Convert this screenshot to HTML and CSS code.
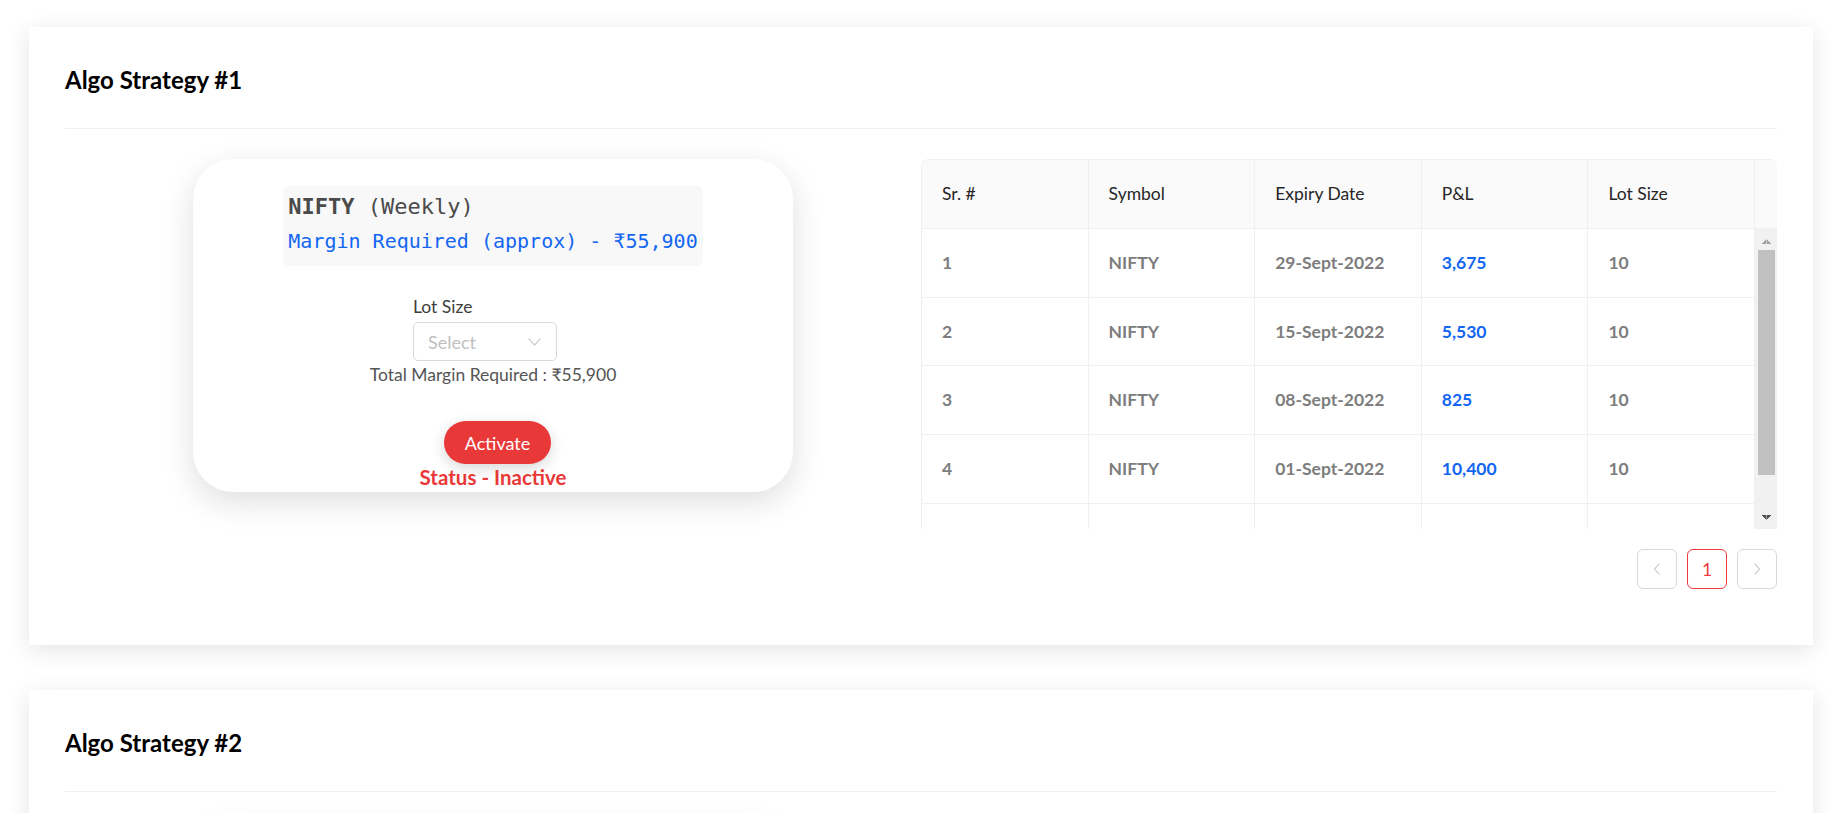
FILE: index.html
```html
<!DOCTYPE html>
<html lang="en">
<head>
<meta charset="utf-8">
<title>Algo Strategies</title>
<link rel="stylesheet" href="styles.css">
</head>
<body>
<main class="page">
  <section class="strategy">
    <header class="strategy-head"><h2 class="strategy-title">Algo Strategy #1</h2></header>
    <div class="strategy-body">
      <div class="info-col">
        <div class="info-card">
          <div class="code-block">
            <div class="code-symbol"><b>NIFTY</b> (Weekly)</div>
            <div class="code-margin">Margin Required (approx) - ₹55,900</div>
          </div>
          <div class="lot-field">
            <span class="lot-label">Lot Size</span>
            <div class="select">
              <span class="select-placeholder">Select</span>
              <svg class="select-arrow" viewBox="0 0 13 8"><path d="M0.5 0.5 L6.5 7 L12.5 0.5" fill="none" stroke="#bfbfbf" stroke-width="1.1"/></svg>
            </div>
          </div>
          <div class="total">Total Margin Required : ₹55,900</div>
          <button class="activate" type="button">Activate</button>
          <div class="status">Status - Inactive</div>
        </div>
      </div>
      <div class="table-col">
        <div class="table">
          <div class="table-header">
            <table>
              <colgroup><col><col><col><col><col><col class="gutter-col"></colgroup>
              <thead>
                <tr><th>Sr. #</th><th>Symbol</th><th>Expiry Date</th><th>P&amp;L</th><th>Lot Size</th><th class="gutter"></th></tr>
              </thead>
            </table>
          </div>
          <div class="table-body">
            <div class="body-viewport">
              <table>
                <tbody>
                  <tr><td>1</td><td>NIFTY</td><td>29-Sept-2022</td><td class="pnl">3,675</td><td>10</td></tr>
                  <tr><td>2</td><td>NIFTY</td><td>15-Sept-2022</td><td class="pnl">5,530</td><td>10</td></tr>
                  <tr><td>3</td><td>NIFTY</td><td>08-Sept-2022</td><td class="pnl">825</td><td>10</td></tr>
                  <tr><td>4</td><td>NIFTY</td><td>01-Sept-2022</td><td class="pnl">10,400</td><td>10</td></tr>
                  <tr class="row-partial"><td></td><td></td><td></td><td></td><td></td></tr>
                </tbody>
              </table>
            </div>
            <div class="scrollbar" aria-hidden="true">
              <span class="sb-btn sb-up"></span>
              <span class="sb-track"><span class="sb-thumb"></span></span>
              <span class="sb-btn sb-down"></span>
            </div>
          </div>
        </div>
        <nav class="pagination">
          <button class="page-btn" type="button" aria-label="Previous"><svg viewBox="0 0 8 12" class="page-arrow"><path d="M6.5 0.5 L1.5 6 L6.5 11.5" fill="none" stroke="#c4c4c4" stroke-width="1.1"/></svg></button>
          <button class="page-btn active" type="button">1</button>
          <button class="page-btn" type="button" aria-label="Next"><svg viewBox="0 0 8 12" class="page-arrow"><path d="M1.5 0.5 L6.5 6 L1.5 11.5" fill="none" stroke="#c4c4c4" stroke-width="1.1"/></svg></button>
        </nav>
      </div>
    </div>
  </section>

  <section class="strategy">
    <header class="strategy-head"><h2 class="strategy-title">Algo Strategy #2</h2></header>
    <div class="strategy-body">
      <div class="info-col">
        <div class="info-card info-card-empty"></div>
      </div>
      <div class="table-col"></div>
    </div>
  </section>
</main>
</body>
</html>
```
FILE: styles.css
```css
* { box-sizing: border-box; }
html, body { margin: 0; background: #fff; }
body { font-family: Lato, "Open Sans", "DejaVu Sans", sans-serif; color: #262626; }

.page { padding: 27px 29px; display: flex; flex-direction: column; gap: 45px; }

.strategy { background: #fff; box-shadow: 0 5px 22px rgba(0, 0, 0, 0.11); }
.strategy-head { margin: 0 36px; padding: 37px 0 32px; border-bottom: 1px solid #f0f0f0; }
.strategy-title { margin: 0; font-size: 24px; line-height: 32px; font-weight: 700; color: #000; }
.strategy-body { display: grid; grid-template-columns: 1fr 1fr; padding: 30px 36px 56px; }

/* left info card */
.info-col { display: flex; justify-content: center; align-items: flex-start; }
.info-card {
  width: 600px; border-radius: 40px; background: #fff;
  box-shadow: 0 10px 32px rgba(0, 0, 0, 0.13);
  display: flex; flex-direction: column; align-items: center;
  padding: 27px 0 3px;
}
.info-card-empty { height: 333px; }
.code-block {
  background: #f8f8f8; border-radius: 6px; padding: 4px 5px 7px;
  font-family: "DejaVu Sans Mono", "Liberation Mono", monospace;
}
.code-symbol { font-size: 22px; line-height: 34px; color: #4a4a4a; }
.code-symbol b { font-weight: 700; }
.code-margin { font-size: 20px; line-height: 35px; color: #1366f2; }

.lot-field { margin-top: 30px; margin-right: 16px; width: 144px; display: flex; flex-direction: column; }
.lot-label { font-size: 17.5px; line-height: 22px; color: #3d3d3d; margin-bottom: 4px; }
.select {
  height: 39px; border: 1px solid #d9d9d9; border-radius: 5px; background: #fff;
  display: flex; align-items: center; justify-content: space-between;
  padding: 0 15px 0 14px;
}
.select-placeholder { font-size: 18px; color: #bfbfbf; }
.select-arrow { width: 13px; height: 8px; display: block; }

.total { margin-top: 2px; font-size: 17.5px; line-height: 24px; color: #555; }
.activate {
  margin-top: 34px; margin-left: 9px; height: 43px; padding: 0 21px;
  border: none; border-radius: 22px; background: #e93838; color: #fff;
  font-family: inherit; font-size: 18px; cursor: pointer;
  box-shadow: 0 4px 14px rgba(0, 0, 0, 0.16);
}
.status { margin-top: 1px; font-size: 20.5px; line-height: 24px; font-weight: 700; color: #e93838; }

/* right table */
.table-col { display: flex; flex-direction: column; }
.table {
  border-top: 1px solid #f0f0f0; border-left: 1px solid #f0f0f0;
  border-radius: 8px 8px 0 0; overflow: hidden;
}
.table table { width: 100%; border-collapse: separate; border-spacing: 0; table-layout: fixed; }
.gutter-col { width: 22px; }
.table th {
  background: #fafafa; padding: 20px; font-size: 17.5px; line-height: 28px;
  font-weight: 400; text-align: left; color: #262626;
  border-right: 1px solid #f0f0f0; border-bottom: 1px solid #f0f0f0;
}
.table th.gutter { padding: 0; border-right: none; }

.table-body { display: flex; height: 300px; }
.body-viewport { flex: 1; min-width: 0; overflow: hidden; }
.table td {
  padding: 20px; font-size: 17.5px; line-height: 27.7px; font-weight: 700; color: #7d7d7d;
  border-right: 1px solid #f0f0f0; border-bottom: 1px solid #f0f0f0;
}
.table td.pnl { color: #1366f2; }

.scrollbar { width: 22px; flex: none; display: flex; flex-direction: column; background: #f1f1f1; }
.sb-btn { height: 21px; flex: none; }
.sb-up {
  background:
    linear-gradient(to bottom right, transparent 50%, #a3a3a3 50%) 7px 10px / 4.5px 5px no-repeat,
    linear-gradient(to bottom left, transparent 50%, #a3a3a3 50%) 11.5px 10px / 4.5px 5px no-repeat;
}
.sb-down {
  background:
    linear-gradient(to top right, transparent 50%, #505050 50%) 7px 7px / 4.5px 5px no-repeat,
    linear-gradient(to top left, transparent 50%, #505050 50%) 11.5px 7px / 4.5px 5px no-repeat;
}
.sb-track { flex: 1; padding: 0 2px 0 3px; }
.sb-thumb { display: block; height: 225px; background: #c1c1c1; }

.pagination { display: flex; justify-content: flex-end; gap: 10px; margin-top: 20px; }
.page-btn {
  width: 40px; height: 40px; border: 1px solid #d9d9d9; border-radius: 6px; background: #fff;
  display: flex; align-items: center; justify-content: center; padding: 0;
  font-family: inherit; font-size: 17.5px; color: #595959;
}
.page-btn.active { border-color: #ee3b3b; color: #ee3b3b; }
.page-arrow { width: 8px; height: 12px; display: block; }
```
